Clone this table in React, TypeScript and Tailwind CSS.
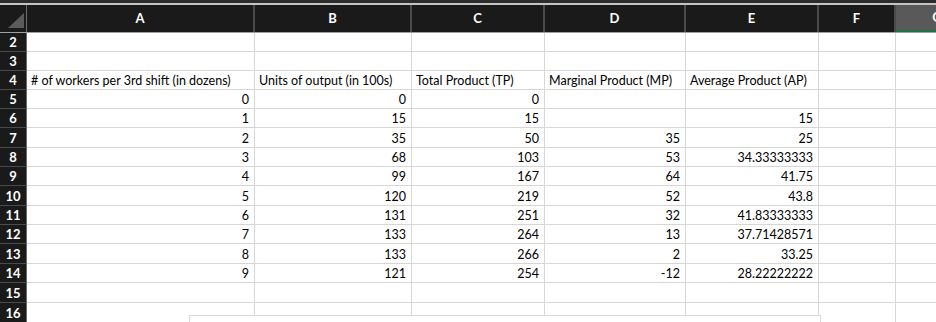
const columns = [
  { label: 'A', width: 'w-[228px]' },
  { label: 'B', width: 'w-[157px]' },
  { label: 'C', width: 'w-[133px]' },
  { label: 'D', width: 'w-[141px]' },
  { label: 'E', width: 'w-[133px]' },
  { label: 'F', width: 'w-[77px]' },
  { label: 'G', width: 'w-[84px]' },
];

type Row = { n: number; h: string; cells: string[]; text?: boolean };

const rows: Row[] = [
  { n: 2, h: 'h-[19px]', cells: [] },
  { n: 3, h: 'h-[19px]', cells: [] },
  {
    n: 4,
    h: 'h-[19px]',
    text: true,
    cells: [
      '# of workers per 3rd shift (in dozens)',
      'Units of output (in 100s)',
      'Total Product (TP)',
      'Marginal Product (MP)',
      'Average Product (AP)',
    ],
  },
  { n: 5, h: 'h-[19px]', cells: ['0', '0', '0', '', ''] },
  { n: 6, h: 'h-[19px]', cells: ['1', '15', '15', '', '15'] },
  { n: 7, h: 'h-[20px]', cells: ['2', '35', '50', '35', '25'] },
  { n: 8, h: 'h-[19px]', cells: ['3', '68', '103', '53', '34.33333333'] },
  { n: 9, h: 'h-[19px]', cells: ['4', '99', '167', '64', '41.75'] },
  { n: 10, h: 'h-[20px]', cells: ['5', '120', '219', '52', '43.8'] },
  { n: 11, h: 'h-[19px]', cells: ['6', '131', '251', '32', '41.83333333'] },
  { n: 12, h: 'h-[19px]', cells: ['7', '133', '264', '13', '37.71428571'] },
  { n: 13, h: 'h-[20px]', cells: ['8', '133', '266', '2', '33.25'] },
  { n: 14, h: 'h-[19px]', cells: ['9', '121', '254', '-12', '28.22222222'] },
  { n: 15, h: 'h-[20px]', cells: [] },
  { n: 16, h: 'h-[20px]', cells: [] },
];

const App = () => {
  return (
    <div className="relative w-[936px] h-[322px] overflow-hidden bg-white font-['Lato','Open_Sans',sans-serif] text-[12.5px] text-black">
      <div className="h-[3px] bg-[#2c2c2c]" />
      <div className="h-[2px] bg-[#c4c4c4]" />

      {/* column headers */}
      <div className="flex h-[28px] border-b border-[#a0a0a0] bg-[#1a1a1a]">
        <div className="flex w-[27px] shrink-0 items-end justify-end border-r border-[#6a6a6a] pb-[4px] pr-[2px]">
          <svg width="16" height="15" viewBox="0 0 16 15">
            <polygon points="16,0 16,15 0,15" fill="#5b5b5b" />
          </svg>
        </div>
        {columns.map((c) => (
          <div
            key={c.label}
            className={`${c.width} shrink-0 flex items-center justify-center pt-[1px] border-r-2 border-[#4a4a4a] font-bold text-white text-[13px] ${
              c.label === 'G' ? 'bg-[#595959] border-b-2 border-b-[#1e7145]' : ''
            }`}
          >
            {c.label}
          </div>
        ))}
      </div>

      {rows.map((r) => (
        <div key={r.n} className={`flex ${r.h}`}>
          <div className="flex w-[27px] shrink-0 items-center justify-center pt-[2px] border-b border-r border-b-[#4a4a4a] border-r-[#6a6a6a] bg-[#1a1a1a] font-bold text-white text-[13px]">
            {r.n}
          </div>
          {columns.map((c, i) => (
            <div
              key={c.label}
              className={`${c.width} shrink-0 flex items-center pt-[3px] overflow-visible whitespace-nowrap border-b border-r border-[#d6d6d6] ${
                r.text ? 'justify-start pl-[4px]' : 'justify-end pr-[5px]'
              }`}
            >
              {r.cells[i] ?? ''}
            </div>
          ))}
        </div>
      ))}

      {/* embedded chart frame peeking in at the bottom */}
      <div className="absolute left-[189px] top-[315px] h-[40px] w-[632px] border border-[#dadada] bg-white" />
    </div>
  );
};

export default App;
